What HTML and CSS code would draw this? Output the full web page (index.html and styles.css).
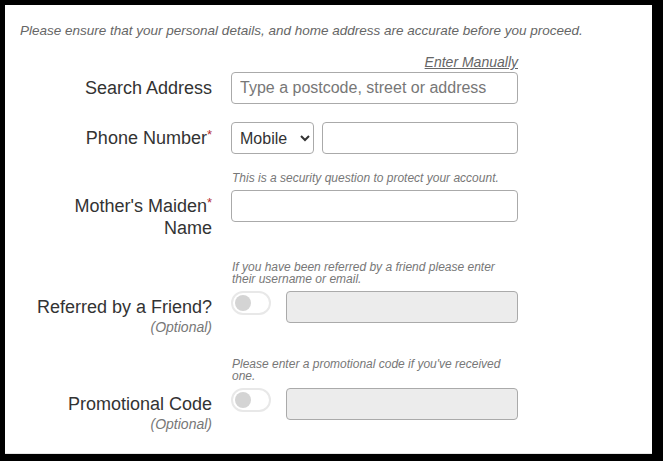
FILE: index.html
```html
<!DOCTYPE html>
<html lang="en">
  <head>
    <meta charset="UTF-8" />
    <meta name="viewport" content="width=device-width, initial-scale=1.0" />
    <title>Your Details</title>
    <link rel="stylesheet" href="styles.css">
  </head>
  <body>
    <div class="panel">
      <p class="intro">Please ensure that your personal details, and home address are accurate before you proceed.</p>
      <form class="details-form">
        <div class="row">
          <a class="note link" href="#">Enter Manually</a>
          <label class="label" for="search-address">Search Address</label>
          <div class="control">
            <input type="text" id="search-address" class="text-input wide" placeholder="Type a postcode, street or address" />
          </div>
        </div>
        <div class="row">
          <label class="label" for="phone">Phone Number<span class="req">*</span></label>
          <div class="control">
            <select class="phone-type">
              <option>Mobile</option>
              <option>Home</option>
              <option>Work</option>
            </select>
            <input type="text" id="phone" class="text-input grow" />
          </div>
        </div>
        <div class="row">
          <p class="note">This is a security question to protect your account.</p>
          <label class="label" for="maiden">Mother's Maiden<span class="req">*</span><br>Name</label>
          <div class="control">
            <input type="text" id="maiden" class="text-input wide" />
          </div>
        </div>
        <div class="row">
          <p class="note">If you have been referred by a friend please enter their username or email.</p>
          <label class="label" for="referrer">Referred by a Friend?<span class="optional">(Optional)</span></label>
          <div class="control">
            <span class="toggle"><span class="knob"></span></span>
            <input type="text" id="referrer" class="text-input grow" disabled />
          </div>
        </div>
        <div class="row">
          <p class="note">Please enter a promotional code if you've received one.</p>
          <label class="label" for="promo">Promotional Code<span class="optional">(Optional)</span></label>
          <div class="control">
            <span class="toggle"><span class="knob"></span></span>
            <input type="text" id="promo" class="text-input grow" disabled />
          </div>
        </div>
      </form>
    </div>
  </body>
</html>
```

FILE: styles.css
```css
* {
  box-sizing: border-box;
  margin: 0;
  padding: 0;
  font-family: "Liberation Sans", Arial, Helvetica, sans-serif;
}
body {
  background-color: #000;
}
.panel {
  background-color: #fff;
  margin: 5px;
  width: 647px;
  height: 449px;
  padding: 18px 20px 0 15px;
  border-bottom: 1px solid #e6e6e6;
}
.intro {
  font-size: 13.5px;
  line-height: 16px;
  font-style: italic;
  color: #666;
  margin-bottom: 15px;
}
.row {
  display: grid;
  grid-template-columns: 192px 287px;
  grid-template-areas:
    ". note"
    "label control";
  column-gap: 19px;
  margin-bottom: 18px;
}
.note {
  grid-area: note;
  font-size: 12px;
  line-height: 12px;
  font-style: italic;
  color: #777;
  margin-bottom: 6px;
  padding-left: 1px;
}
.link {
  font-size: 14px;
  line-height: 16px;
  text-align: right;
  color: #666;
  margin-bottom: 2px;
}
.label {
  grid-area: label;
  text-align: right;
  font-size: 18px;
  line-height: 22px;
  color: #333;
  padding-top: 5px;
  padding-bottom: 4px;
}
.req {
  color: #b52a2a;
  font-size: 13px;
  vertical-align: top;
  line-height: 15px;
}
.optional {
  display: block;
  font-size: 14px;
  line-height: 18px;
  font-style: italic;
  color: #777;
}
.control {
  grid-area: control;
  display: flex;
  align-items: flex-start;
  gap: 8px;
}
.text-input {
  height: 32px;
  border: 1px solid #aaa;
  border-radius: 4px;
  padding: 0 8px;
  font-size: 16px;
  color: #333;
  background-color: #fff;
}
.text-input::placeholder {
  color: #777;
}
.text-input:disabled {
  background-color: #ececec;
}
.wide {
  width: 100%;
}
.grow {
  flex: 1;
  min-width: 0;
}
.phone-type {
  width: 83px;
  height: 32px;
  border: 1px solid #aaa;
  border-radius: 4px;
  padding: 0 4px;
  font-size: 16px;
  color: #333;
  background-color: #fff;
}
.toggle {
  display: flex;
  align-items: center;
  width: 40px;
  height: 24px;
  border: 2px solid #e8e8e8;
  border-radius: 12px;
  padding: 2px;
  margin-right: 7px;
  flex-shrink: 0;
}
.knob {
  width: 16px;
  height: 16px;
  border-radius: 50%;
  background-color: #d4d4d4;
}
```
